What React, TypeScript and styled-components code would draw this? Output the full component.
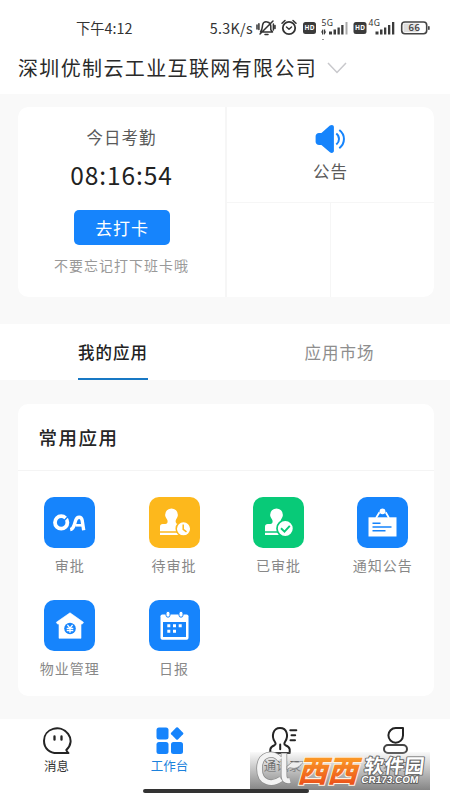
import React from "react";
import styled, { createGlobalStyle } from "styled-components";

const BLUE = "#1684fc";

const GlobalStyle = createGlobalStyle`
  * { box-sizing: border-box; }
  body { margin: 0; background: #fff; font-family: "Noto Sans CJK SC", "Noto Sans", sans-serif; }
`;

const Screen = styled.div`
  position: relative;
  display: flex;
  flex-direction: column;
  width: 450px;
  height: 800px;
  background: #f9f9f9;
  overflow: hidden;
`;

const Header = styled.header`
  height: 94px;
  background: #fff;
`;

const StatusBar = styled.div`
  display: flex;
  align-items: center;
  height: 40px;
  padding: 16px 16px 0 76px;
  color: #333;
`;

const StatusText = styled.span<{ $gap?: number }>`
  font-size: 14.3px;
  line-height: 24px;
  letter-spacing: ${(p) => p.$gap ?? 0}px;
  white-space: nowrap;
`;

const StatusRight = styled.div`
  display: flex;
  align-items: center;
  gap: 3px;
  margin-left: auto;
`;

const TitleRow = styled.div`
  display: flex;
  align-items: center;
  gap: 10px;
  height: 54px;
  padding: 1px 0 0 18px;
`;

const Title = styled.h1`
  margin: 0;
  font-size: 20px;
  font-weight: 400;
  line-height: 30px;
  letter-spacing: 1.37px;
  color: #2a2a2a;
`;

const Attendance = styled.section`
  display: grid;
  grid-template-columns: 207px 1fr;
  column-gap: 2px;
  flex: none;
  height: 190px;
  margin: 13px 16px 0 18px;
  border-radius: 10px;
  overflow: hidden;
  background: #f6f6f6;
`;

const Punch = styled.div`
  display: flex;
  flex-direction: column;
  align-items: center;
  padding-top: 17px;
  background: #fff;
`;

const Caption = styled.div`
  font-size: 16.5px;
  line-height: 26px;
  letter-spacing: 1px;
  color: #5a5a5a;
`;

const Clock = styled.div`
  margin-top: 7px;
  font-size: 24.5px;
  line-height: 36px;
  letter-spacing: 0.9px;
  color: #222;
`;

const PunchButton = styled.button`
  width: 96px;
  height: 35px;
  margin: 17px 0 0;
  padding: 0 0 0 1px;
  border: 0;
  border-radius: 5px;
  background: ${BLUE};
  color: #fff;
  font-family: inherit;
  font-size: 17px;
  line-height: 35px;
  letter-spacing: 0.8px;
`;

const Hint = styled.div`
  margin-top: 9px;
  font-size: 14px;
  line-height: 22px;
  letter-spacing: 1px;
  color: #999;
`;

const Shortcuts = styled.div`
  display: grid;
  grid-template: 95px 1fr / 103px 1fr;
  gap: 1px;
`;

const Shortcut = styled.div<{ $wide?: boolean }>`
  display: flex;
  flex-direction: column;
  align-items: center;
  gap: 4px;
  grid-column: ${(p) => (p.$wide ? "1 / -1" : "auto")};
  padding-top: 17px;
  background: #fff;
`;

const Tabs = styled.nav`
  display: flex;
  flex: none;
  height: 56px;
  margin-top: 27px;
  background: #fff;
`;

const TabCell = styled.div`
  display: flex;
  flex: 1;
  justify-content: center;
`;

const Tab = styled.div<{ $active?: boolean }>`
  height: 56px;
  padding-top: 16px;
  margin-left: ${(p) => (p.$active ? 1 : 4)}px;
  font-size: 16.5px;
  font-weight: ${(p) => (p.$active ? 500 : 400)};
  line-height: 25px;
  letter-spacing: 1px;
  color: ${(p) => (p.$active ? "#222" : "#8e8e8e")};
  border-bottom: 2px solid ${(p) => (p.$active ? "#1878c4" : "transparent")};
`;

const AppsCard = styled.section`
  flex: none;
  height: 292px;
  margin: 24px 16px 0 17.5px;
  border-radius: 10px;
  background: #fff;
`;

const CardTitle = styled.h2`
  height: 67px;
  margin: 0;
  padding: 19px 21px 0;
  border-bottom: 1px solid #f4f4f4;
  font-size: 18.5px;
  font-weight: 500;
  line-height: 29px;
  letter-spacing: 1.5px;
  color: #262626;
`;

const AppGrid = styled.div`
  display: grid;
  grid-template-columns: repeat(4, 104.4px);
  grid-auto-rows: 103px;
  padding-top: 26px;
`;

const AppItem = styled.div`
  display: flex;
  flex-direction: column;
  align-items: center;
`;

const Tile = styled.div<{ $color: string }>`
  width: 51px;
  height: 51px;
  border-radius: 10px;
  background: ${(p) => p.$color};
`;

const AppLabel = styled.div`
  margin-top: 6px;
  font-size: 14px;
  line-height: 23px;
  letter-spacing: 1px;
  color: #888;
`;

const BottomBar = styled.footer`
  display: grid;
  grid-template-columns: repeat(4, 113px);
  height: 81px;
  margin-top: auto;
  padding-top: 7px;
  background: #fff;
`;

const NavItem = styled.div<{ $active?: boolean }>`
  display: flex;
  flex-direction: column;
  align-items: center;
  font-size: 12.5px;
  line-height: 18px;
  color: ${(p) => (p.$active ? "#1c82dc" : "#333")};
  svg { display: block; margin-bottom: 1px; }
`;

const HomeIndicator = styled.div`
  position: absolute;
  left: 143px;
  bottom: 7px;
  width: 166px;
  height: 4px;
  border-radius: 2px;
  background: #333;
`;

const Watermark = styled.div`
  position: absolute;
  left: 250px;
  top: 752px;
  width: 180px;
  height: 38px;
  background: linear-gradient(rgba(220, 220, 220, 0.15), rgba(160, 160, 160, 0.8) 60%, #858585);
  svg { display: block; overflow: visible; }
`;

const StatusIcons = () => (
  <svg width="178" height="24" viewBox="0 0 178 24">
    <g fill="none" stroke="#333" strokeWidth="1.5" strokeLinecap="round" strokeLinejoin="round">
      <path d="M4.5 16h12l-1.7-2.3v-3.4c0-5-7.1-6.2-8.2-1.5-.4 2 .1 4.1-2.1 7.2zM9 18.5h3M4 18L17 5M1 9v4M2.9 7.8v5.8M17.4 8v6M19 9.5v3" />
      <circle cx="33" cy="12" r="6.2" strokeWidth="1.8" />
      <path d="M26 7.3l3-2.8M40 7.3l-3-2.8M30.5 11l2.5 2.2 2.5-2.2" />
    </g>
    <g fill="#3b3b3b">
      <rect x="47" y="6" width="13" height="12" rx="2.5" />
      <rect x="97.5" y="6" width="13" height="12" rx="2.5" />
      <path d="M73 15.5h3v3h-3zM77.5 13.5h2.5v5h-2.5zM81.5 11.5h2.3v7h-2.3zM85.2 9h2.3v9.5h-2.3zM119.5 15.5h3v3h-3zM124 13.5h2.5v5H124zM128 11.5h2.3v7H128zM132 9h2.3v9.5H132zM136 6h2.3v12.5H136z" />
      <path fill="#aaa" d="M89.5 6h2v12.5h-2z" />
      <path d="M65 16.5l1.5-3h.8v5H66v-2zM68 13.5h1.2v2h1l-1.6 3H68z" />
    </g>
    <g fontFamily="Noto Sans, sans-serif">
      <text x="48.4" y="14.2" fontSize="6.5" fontWeight="700" fill="#fff" textLength="10.2">HD</text>
      <text x="98.9" y="14.2" fontSize="6.5" fontWeight="700" fill="#fff" textLength="10.2">HD</text>
      <text x="65.5" y="9.8" fontSize="8.5" fill="#333" textLength="11.5">5G</text>
      <text x="112.5" y="9.8" fontSize="8.5" fill="#333" textLength="11.5">4G</text>
    </g>
    <rect x="145.7" y="6" width="25" height="11.7" rx="3.2" fill="none" stroke="#444" strokeWidth="1.6" />
    <path d="M147.5 7.5h15v8.7h-15z" fill="#dedede" />
    <rect x="172" y="10" width="1.7" height="4" rx=".8" fill="#444" />
    <text x="152.5" y="15.3" fontFamily="Noto Sans, sans-serif" fontSize="9.5" fontWeight="500" fill="#333" textLength="11.5">66</text>
    <rect x="66.500" y="23" width="1" height="1" fill="#333" />
  </svg>
);

const Chevron = () => (
  <svg width="20" height="12" viewBox="0 0 20 12" fill="none" stroke="#c8c8cc" strokeWidth="1.5">
    <path d="M1 1l9 9.5L19 1" />
  </svg>
);

const Speaker = () => (
  <svg width="32" height="30" viewBox="0 0 32 30">
    <path
      fill={BLUE}
      d="M4 9h2.4L14.900 1.600c1.700-1.300 4-.8 4 1.400v23.800c0 2.100-2.300 2.800-4 1.400L6.400 21H4.200C2 21 .6 19.800.6 17.800v-5.600C.6 10.300 2 9 4 9z"
    />
    <path d="M21.300 9.500c3.600 2.800 3.600 8 0 11M24.300 6c6.200 4.700 6.200 13.500 0 18.200" fill="none" stroke={BLUE} strokeWidth="2" />
  </svg>
);

const Stamp = () => (
  <path
    fill="#fff"
    d="M22.5 11.5a6.4 6.4 0 0 1 6.4 6.4c0 2.4-1.8 3.6-2.2 5.6-.3 2 .4 3.3 2.4 3.6h4v7.2H11v-4.5c0-1.8 1-2.7 2.7-2.7h2.5c2 0 2.7-1.5 2.3-3.6-.4-2-2.4-3.2-2.4-5.6a6.4 6.4 0 0 1 6.4-6.4zM11 35.8h19V38H11z"
  />
);

const glyphs: Record<string, React.ReactNode> = {
  oa: (
    <g fill="none" stroke="#fff">
      <circle cx="17.2" cy="25.4" r="6.2" strokeWidth="3.8" />
      <path d="M18.6 25.2l5.2-5.4" stroke={BLUE} strokeWidth="1.4" />
      <path d="M26.2 32.6c2.6-.4 3.3-2.4 4.1-4.9l1.4-4.4c1.4-4.2 5.8-4.1 6.5.2l1.5 9.8" strokeWidth="3.4" />
      <path d="M31.5 28.3h7.5" strokeWidth="2.6" />
    </g>
  ),
  pending: (
    <>
      <Stamp />
      <circle cx="34.5" cy="31.8" r="7.3" fill="#fff" stroke="#fdb81c" strokeWidth="1.5" />
      <path d="M34.2 27.5v4.8l3.3 2.5" fill="none" stroke="#fdb81c" strokeWidth="1.5" />
    </>
  ),
  approved: (
    <>
      <g transform="translate(1 0)">
        <Stamp />
      </g>
      <circle cx="32.3" cy="31.5" r="8.3" fill="#fff" stroke="#08ca78" strokeWidth="1.7" />
      <path d="M28 31.3l3.5 3.3 5.3-5.7" fill="none" stroke="#08ca78" strokeWidth="1.9" />
    </>
  ),
  notice: (
    <>
      <path d="M19 21l3.5-5.7M32 21l-3.3-5.7" stroke="#fff" strokeWidth="1.8" />
      <circle cx="25.5" cy="14.3" r="2.9" fill="#fff" />
      <path fill="#fff" d="M11.5 20.3h28v19.2h-28z" />
      <path d="M15.5 26.2h8M15.5 30h19M15.5 33.7h13" stroke={BLUE} strokeWidth="1.4" />
    </>
  ),
  property: (
    <>
      <path
        d="M26 12.8l13.5 9.5-1.2 1.8H37v14.2H15V24.1h-1.5l-1.2-1.8z"
        fill="#fff"
        stroke="#fff"
        strokeWidth=".6"
        strokeLinejoin="round"
      />
      <circle cx="26" cy="28.5" r="5.8" fill={BLUE} />
      <path d="M23.4 24.8l2.6 3.4 2.6-3.4M22.7 28.4h6.6M22.7 30.5h6.6M26 28v4.7" stroke="#fff" strokeWidth="1.3" fill="none" />
    </>
  ),
  report: (
    <>
      <rect x="11.5" y="14.5" width="28" height="25.2" rx="1.8" fill="#fff" />
      <path fill={BLUE} d="M14 22h23v15H14z" />
      <g stroke={BLUE} strokeWidth="1" fill="#fff">
        <rect x="17" y="11.2" width="4" height="6" rx="2" />
        <rect x="30" y="11.2" width="4" height="6" rx="2" />
      </g>
      <path
        fill="#fff"
        d="M18.3 24.3h3v3h-3zM24 24.3h3v3h-3zM29.7 24.3h3v3h-3zM18.3 29.8h3v3h-3zM24 29.8h3v3h-3z"
      />
    </>
  ),
};

const apps = [
  { id: "oa", label: "审批", color: BLUE },
  { id: "pending", label: "待审批", color: "#fdb81c" },
  { id: "approved", label: "已审批", color: "#08ca78" },
  { id: "notice", label: "通知公告", color: BLUE },
  { id: "property", label: "物业管理", color: BLUE },
  { id: "report", label: "日报", color: BLUE },
];

const line = { fill: "none", stroke: "#242424", strokeWidth: 2, strokeLinecap: "round" as const, strokeLinejoin: "round" as const };

const navItems = [
  {
    label: "消息",
    icon: (
      <g {...line}>
        <path d="M24.3 24c5-4.5 5.7-11 1.8-16.2C18.5-2.3 2 2.5 2 14.7c0 8 6 12.4 13 12.4h11.5c-.8-.8-1.8-1.7-2.2-3.1z" />
        <path d="M12.5 10.5v3.2M19.5 10.5v3.2" strokeWidth="2.3" />
      </g>
    ),
  },
  {
    label: "工作台",
    active: true,
    icon: (
      <g fill={BLUE}>
        <rect x="1.5" y="1.5" width="12" height="12" rx="2.5" />
        <rect x="1.5" y="16" width="12" height="12" rx="2.5" />
        <rect x="16" y="16" width="12" height="12" rx="2.5" />
        <rect x="17.3" y="2.7" width="9.6" height="9.6" rx="1.2" transform="rotate(45 22.1 7.5)" />
      </g>
    ),
  },
  {
    label: "通讯录",
    icon: (
      <g {...line}>
        <path d="M2.3 27v-3.5c.2-2.4 2-3.4 4.2-4.3 1.6-.7 1.2-2.2.2-3.7C3.3 10.5 4.8 2 12 2s8.7 8 5.2 13.5c-1 1.5-1.3 3 .3 3.7 2.2.9 4 1.9 4.2 4.3V27zM12.2 18.5v4.7M22.3 4.2h6M23.5 9.3h3.7M22.5 14.3H27" />
      </g>
    ),
  },
  {
    label: "我的",
    icon: (
      <g {...line}>
        <path d="M22 2v7.5a7.3 7.3 0 1 1-7.3-7.4z" />
        <rect x="3" y="19" width="23" height="8" rx="4" stroke="#444" />
      </g>
    ),
  },
];

const SiteMark = () => (
  <svg width="180" height="38" viewBox="0 0 180 38">
    <defs>
      <linearGradient id="orange" x1="0" y1="0" x2="0" y2="1">
        <stop offset="0.1" stopColor="#ffab2a" />
        <stop offset="0.9" stopColor="#ea4c18" />
      </linearGradient>
    </defs>
    <g fill="none">
      <path d="M30 7.5C24-1 9.500 1.500 9.500 16.500S22 33.500 31 27M34 1v22c0 5 2 6.500 6 5.500" stroke="#8b8b8b" strokeWidth="6.400" />
      <path d="M30 7.500C24-1 9.500 1.500 9.500 16.500S22 33.500 31 27M34 1.500v21.500c0 5 2 6.500 6 5.500" stroke="#f3f3f3" strokeWidth="4.900" />
    </g>
    <path d="M37 14c3-1 4-5 8-4 3 .8 5-1 8.500-.5-3 5-8 8-12 6.500-2-.7-3 0-4.500 2z" fill="#eee" stroke="#888" strokeWidth=".8" />
    <g
      transform="skewX(-16)"
      fontFamily="Noto Sans CJK SC, sans-serif"
      fontWeight="900"
      fontSize="30"
      fill="url(#orange)"
      stroke="#fff3e2"
      strokeWidth="2"
      paintOrder="stroke"
    >
      <text x="55.500" y="30">西</text>
      <text x="85.500" y="30">西</text>
    </g>
    <g fill="#fff" stroke="#626262" strokeWidth="1.8" strokeLinejoin="round" paintOrder="stroke" transform="skewX(-7)">
      <text x="116" y="20.5" fontFamily="Noto Sans CJK SC, sans-serif" fontWeight="700" fontSize="19.5" textLength="60">软件园</text>
      <text x="115" y="31.5" fontFamily="Liberation Sans, sans-serif" fontWeight="700" fontSize="10" textLength="57">CR173.COM</text>
    </g>
  </svg>
);

export default function App() {
  return (
    <Screen>
      <GlobalStyle />
      <Header>
        <StatusBar>
          <StatusText>下午4:12</StatusText>
          <StatusRight>
            <StatusText $gap={0.3}>5.3K/s</StatusText>
            <StatusIcons />
          </StatusRight>
        </StatusBar>
        <TitleRow>
          <Title>深圳优制云工业互联网有限公司</Title>
          <Chevron />
        </TitleRow>
      </Header>
      <Attendance>
        <Punch>
          <Caption>今日考勤</Caption>
          <Clock>08:16:54</Clock>
          <PunchButton>去打卡</PunchButton>
          <Hint>不要忘记打下班卡哦</Hint>
        </Punch>
        <Shortcuts>
          <Shortcut $wide>
            <Speaker />
            <Caption>公告</Caption>
          </Shortcut>
          <Shortcut />
          <Shortcut />
        </Shortcuts>
      </Attendance>
      <Tabs>
        <TabCell>
          <Tab $active>我的应用</Tab>
        </TabCell>
        <TabCell>
          <Tab>应用市场</Tab>
        </TabCell>
      </Tabs>
      <AppsCard>
        <CardTitle>常用应用</CardTitle>
        <AppGrid>
          {apps.map((app) => (
            <AppItem key={app.id}>
              <Tile $color={app.color}>
                <svg width="51" height="51" viewBox="0 0 51 51">
                  {glyphs[app.id]}
                </svg>
              </Tile>
              <AppLabel>{app.label}</AppLabel>
            </AppItem>
          ))}
        </AppGrid>
      </AppsCard>
      <BottomBar>
        {navItems.map((item) => (
          <NavItem key={item.label} $active={item.active}>
            <svg width="30" height="30" viewBox="0 0 30 30">
              {item.icon}
            </svg>
            {item.label}
          </NavItem>
        ))}
      </BottomBar>
      <Watermark>
        <SiteMark />
      </Watermark>
      <HomeIndicator />
    </Screen>
  );
}
